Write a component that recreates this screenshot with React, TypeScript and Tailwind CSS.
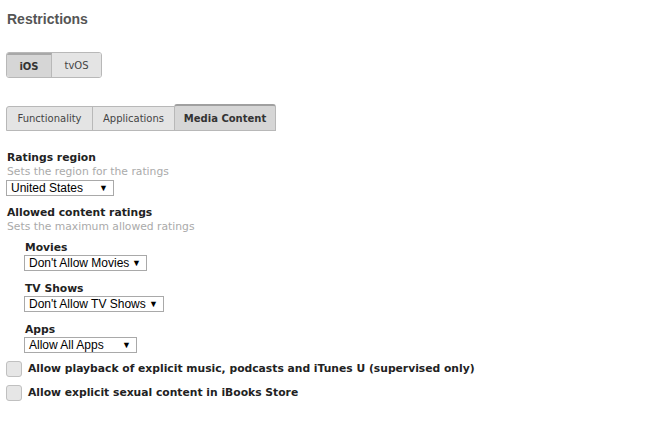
import React, { useState } from 'react';

const verdana = { fontFamily: '"DejaVu Sans", Verdana, sans-serif' };
const arial = { fontFamily: '"Liberation Sans", Arial, sans-serif' };

const Select: React.FC<{ value: string; width: string }> = ({ value, width }) => (
  <div
    className={`${width} h-[16px] border border-[#a9a9a9] bg-white flex items-center justify-between pl-[4px] pr-[5px] text-[12px] leading-none text-black`}
    style={arial}
  >
    <span>{value}</span>
    <span className="text-[9px]">▼</span>
  </div>
);

const Checkbox: React.FC<{ label: string }> = ({ label }) => (
  <div className="flex items-center gap-[6px]">
    <div className="w-[16px] h-[16px] rounded-[3px] border border-[#c0c0c0] bg-[#e6e6e6]" />
    <span className="text-[10.75px] font-bold text-[#222]" style={verdana}>{label}</span>
  </div>
);

const App: React.FC = () => {
  const [platform] = useState('iOS');
  const [tab] = useState('Media Content');

  return (
    <div className="w-[658px] h-[435px] bg-white pl-[6px] pt-[11px]" style={verdana}>
      <h1 className="text-[14px] font-bold text-[#555] pl-[1px] leading-[16px]" style={arial}>Restrictions</h1>

      <div className="flex mt-[25px] h-[26px] w-max rounded-[3px] border border-[#b8b8b8] overflow-hidden text-[10px] text-[#444]">
        {['iOS', 'tvOS'].map((p) => (
          <div
            key={p}
            className={`flex items-center justify-center ${p === platform ? 'w-[45px] bg-[#d6d6d6] font-bold text-[#333] border-t-2 border-t-[#a8a8a8] border-r border-r-[#b8b8b8]' : 'w-[49px] bg-[#e4e4e4]'}`}
          >
            {p}
          </div>
        ))}
      </div>

      <div className="flex items-end mt-[26px] h-[27px] text-[10px] text-[#444]">
        {['Functionality', 'Applications', 'Media Content'].map((t, i) => (
          <div
            key={t}
            className={`flex items-center justify-center border border-[#b8b8b8] ${i > 0 ? '-ml-px' : ''} ${t === tab ? 'h-[27px] w-[102px] bg-[#d6d6d6] font-bold text-[#333] border-t-2 border-t-[#a0a0a0] rounded-t-[3px]' : i === 0 ? 'h-[25px] w-[87px] bg-[#e4e4e4] rounded-tl-[3px]' : 'h-[25px] w-[83px] bg-[#e4e4e4]'}`}
          >
            {t}
          </div>
        ))}
      </div>

      <div className="mt-[20px] pl-[1px] text-[10.75px] font-bold text-[#222] leading-[14px]">Ratings region</div>
      <div className="pl-[1px] text-[10.75px] text-[#aaa] leading-[14px]">Sets the region for the ratings</div>
      <div className="mt-[1px]">
        <Select value="United States" width="w-[108px]" />
      </div>

      <div className="mt-[10px] pl-[1px] text-[10.75px] font-bold text-[#222] leading-[14px]">Allowed content ratings</div>
      <div className="pl-[1px] text-[10.75px] text-[#aaa] leading-[14px]">Sets the maximum allowed ratings</div>

      <div className="pl-[18px] mt-[7px] flex flex-col gap-[11px]">
        <div>
          <div className="text-[10.75px] font-bold text-[#222] leading-[14px] pl-[1px]">Movies</div>
          <Select value="Don't Allow Movies" width="w-[123px]" />
        </div>
        <div>
          <div className="text-[10.75px] font-bold text-[#222] leading-[14px] pl-[1px]">TV Shows</div>
          <Select value="Don't Allow TV Shows" width="w-[140px]" />
        </div>
        <div>
          <div className="text-[10.75px] font-bold text-[#222] leading-[14px] pl-[1px]">Apps</div>
          <Select value="Allow All Apps" width="w-[113px]" />
        </div>
      </div>

      <div className="mt-[8px] flex flex-col gap-[8px]">
        <Checkbox label="Allow playback of explicit music, podcasts and iTunes U (supervised only)" />
        <Checkbox label="Allow explicit sexual content in iBooks Store" />
      </div>
    </div>
  );
};

export default App;
